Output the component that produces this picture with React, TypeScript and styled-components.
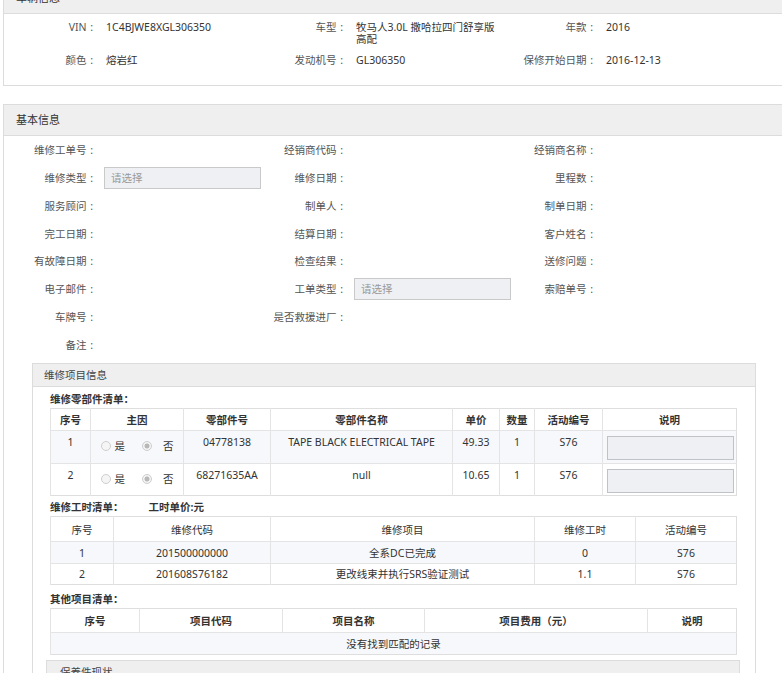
import React from 'react';
import styled, { createGlobalStyle } from 'styled-components';

const GlobalStyle = createGlobalStyle`
  html, body {
    margin: 0;
    padding: 0;
    background: #fff;
    overflow: hidden;
  }
  body {
    font-family: "Noto Sans", "Noto Sans CJK SC", sans-serif;
    font-size: 10.5px;
    color: #333;
  }
  * { box-sizing: border-box; }
`;

const Page = styled.div`
  width: 800px;
  padding-left: 3px;
`;

const Panel = styled.section<{ $top?: number; $bottom?: number }>`
  border: 1px solid #dcdcdc;
  background: #fff;
  margin-top: ${(p) => p.$top ?? 0}px;
  margin-bottom: ${(p) => p.$bottom ?? 0}px;
`;

const PanelHeader = styled.div`
  height: 31px;
  line-height: 29px;
  padding-left: 12px;
  background: #efefef;
  border-bottom: 1px solid #dcdcdc;
  color: #333;
  font-size: 11px;
`;

/* ---------- vehicle summary ---------- */

const InfoGrid = styled.div`
  display: grid;
  grid-template-columns: repeat(3, 250px);
  grid-template-rows: 33px 33px;
  height: 71px;
  padding: 7px 0 0 0;
`;

const InfoItem = styled.div`
  display: flex;
  align-items: flex-start;
  line-height: 12px;
`;

const InfoLabel = styled.div`
  width: 93px;
  flex: none;
  text-align: right;
  color: #555;
  white-space: nowrap;
`;

const InfoValue = styled.div`
  width: 148px;
  margin-left: 9px;
  color: #333;
`;

const Colon = styled.span`
  display: inline-block;
  width: 10.5px;
  text-align: center;
`;

/* ---------- basic form ---------- */

const FormGrid = styled.div`
  display: grid;
  grid-template-columns: repeat(3, 250px);
  grid-auto-rows: 27.75px;
  align-items: center;
`;

const FormItem = styled.div`
  display: flex;
  align-items: center;
`;

const FormLabel = styled.div`
  width: 93px;
  flex: none;
  text-align: right;
  color: #555;
  white-space: nowrap;
`;

const SelectBox = styled.div`
  flex: none;
  width: 157px;
  height: 22px;
  margin-left: 7px;
  padding-left: 6px;
  line-height: 20px;
  border: 1px solid #c9c9c9;
  background: #eef0f4;
  color: #999;
`;

/* ---------- nested panels ---------- */

const SubPanel = styled.div`
  margin: 5px 0 0 28px;
  width: 724px;
  border: 1px solid #dcdcdc;
  border-bottom: none;
`;

const SubHeader = styled.div`
  height: 23px;
  line-height: 22px;
  padding-left: 11px;
  background: #efefef;
  border-bottom: 1px solid #dcdcdc;
  color: #444;
`;

const SubBody = styled.div`
  padding: 5px 15px 0 13px;
`;

const Section = styled.div<{ $top: number }>`
  padding: 0 4px;
  margin-top: ${(p) => p.$top}px;
`;

const SectionTitle = styled.div`
  display: flex;
  gap: 25px;
  height: 16px;
  line-height: 15px;
  font-weight: 700;
  color: #333;
`;

const StatusPanel = styled.div`
  margin-top: 5px;
  border: 1px solid #dcdcdc;
  border-bottom: none;
  background: #efefef;
  height: 20px;
  line-height: 22px;
  padding-left: 13px;
  color: #444;
`;

/* ---------- tables ---------- */

const Table = styled.table`
  width: 100%;
  border-collapse: collapse;
  table-layout: fixed;
  border: 1px solid #dedede;
`;

const Col = styled.col<{ $w: number }>`
  width: ${(p) => p.$w}px;
`;

const HeadRow = styled.tr<{ $h: number }>`
  height: ${(p) => p.$h}px;
`;

const Th = styled.th<{ $bold?: boolean }>`
  font-weight: ${(p) => (p.$bold ? 700 : 400)};
  color: #333;
  text-align: center;
  vertical-align: middle;
  padding: 0 4px;
  border-left: 1px solid #e4e4e4;
  white-space: nowrap;
`;

const BodyRow = styled.tr<{ $h: number; $striped?: boolean }>`
  height: ${(p) => p.$h}px;
  background: ${(p) => (p.$striped ? '#f6f8fb' : '#fff')};
`;

const Td = styled.td<{ $top?: boolean }>`
  text-align: center;
  vertical-align: ${(p) => (p.$top ? 'top' : 'middle')};
  padding: ${(p) => (p.$top ? '3px 4px 0' : '0 4px')};
  line-height: 16px;
  border-left: 1px solid #e4e4e4;
  border-top: 1px solid #e4e4e4;
  white-space: nowrap;
  overflow: hidden;
  color: #333;
`;

const InputTd = styled.td`
  padding: 5px 2px 0 4px;
  vertical-align: top;
  border-left: 1px solid #e4e4e4;
  border-top: 1px solid #e4e4e4;
`;

const TextInput = styled.div`
  height: 24px;
  border: 1px solid #bfc3c8;
  background: #eef0f4;
`;

const RadioGroup = styled.div`
  display: flex;
  align-items: center;
  justify-content: center;
  padding-top: 4px;
  color: #333;
`;

const RadioOption = styled.span<{ $gap: number }>`
  display: inline-flex;
  align-items: center;
  gap: ${(p) => p.$gap}px;
  & + & {
    margin-left: 17px;
  }
`;

const RadioDot = styled.span<{ $on?: boolean }>`
  display: inline-block;
  width: 10px;
  height: 10px;
  border-radius: 50%;
  border: 1px solid #cfcfcf;
  background: ${(p) =>
    p.$on
      ? 'radial-gradient(circle, #b8b8b8 0 2.2px, #f3f3f3 2.8px)'
      : '#f5f5f5'};
`;

/* ---------- data ---------- */

const vehicleInfo: [string, string][] = [
  ['VIN', '1C4BJWE8XGL306350'],
  ['车型', '牧马人3.0L 撒哈拉四门舒享版高配'],
  ['年款', '2016'],
  ['颜色', '熔岩红'],
  ['发动机号', 'GL306350'],
  ['保修开始日期', '2016-12-13'],
];

type Field = { label: string; select?: boolean } | null;

const basicFields: Field[] = [
  { label: '维修工单号' }, { label: '经销商代码' }, { label: '经销商名称' },
  { label: '维修类型', select: true }, { label: '维修日期' }, { label: '里程数' },
  { label: '服务顾问' }, { label: '制单人' }, { label: '制单日期' },
  { label: '完工日期' }, { label: '结算日期' }, { label: '客户姓名' },
  { label: '有故障日期' }, { label: '检查结果' }, { label: '送修问题' },
  { label: '电子邮件' }, { label: '工单类型', select: true }, { label: '索赔单号' },
  { label: '车牌号' }, { label: '是否救援进厂' }, null,
  { label: '备注' }, null, null,
];

const parts = [
  { no: '1', code: '04778138', name: 'TAPE BLACK ELECTRICAL TAPE', price: '49.33', qty: '1', act: 'S76', h: 33 },
  { no: '2', code: '68271635AA', name: 'null', price: '10.65', qty: '1', act: 'S76', h: 32 },
];

const labour = [
  { no: '1', code: '201500000000', item: '全系DC已完成', hours: '0', act: 'S76', h: 22 },
  { no: '2', code: '201608S76182', item: '更改线束并执行SRS验证测试', hours: '1.1', act: 'S76', h: 21 },
];

const Label = ({ text }: { text: string }) => (
  <>
    {text}
    <Colon>:</Colon>
  </>
);

export default function App() {
  return (
    <Page>
      <GlobalStyle />

      <Panel $top={-18} $bottom={18}>
        <PanelHeader>车辆信息</PanelHeader>
        <InfoGrid>
          {vehicleInfo.map(([k, v]) => (
            <InfoItem key={k}>
              <InfoLabel>
                <Label text={k} />
              </InfoLabel>
              <InfoValue>{v}</InfoValue>
            </InfoItem>
          ))}
        </InfoGrid>
      </Panel>

      <Panel>
        <PanelHeader>基本信息</PanelHeader>
        <FormGrid>
          {basicFields.map((f, i) =>
            f ? (
              <FormItem key={i}>
                <FormLabel>
                  <Label text={f.label} />
                </FormLabel>
                {f.select && <SelectBox>请选择</SelectBox>}
              </FormItem>
            ) : (
              <FormItem key={i} />
            )
          )}
        </FormGrid>

        <SubPanel>
          <SubHeader>维修项目信息</SubHeader>
          <SubBody>
            <Section $top={0}>
              <SectionTitle>维修零部件清单：</SectionTitle>
              <Table>
                <colgroup>
                  {[40, 93, 87, 182, 47, 35, 68, 134].map((w, i) => (
                    <Col key={i} $w={w} />
                  ))}
                </colgroup>
                <thead>
                  <HeadRow $h={22}>
                    {['序号', '主因', '零部件号', '零部件名称', '单价', '数量', '活动编号', '说明'].map((t) => (
                      <Th key={t} $bold>{t}</Th>
                    ))}
                  </HeadRow>
                </thead>
                <tbody>
                  {parts.map((p, i) => (
                    <BodyRow key={p.no} $h={p.h} $striped={i === 0}>
                      <Td $top>{p.no}</Td>
                      <Td $top>
                        <RadioGroup>
                          <RadioOption $gap={4}>
                            <RadioDot />是
                          </RadioOption>
                          <RadioOption $gap={11}>
                            <RadioDot $on />否
                          </RadioOption>
                        </RadioGroup>
                      </Td>
                      <Td $top>{p.code}</Td>
                      <Td $top>{p.name}</Td>
                      <Td $top>{p.price}</Td>
                      <Td $top>{p.qty}</Td>
                      <Td $top>{p.act}</Td>
                      <InputTd>
                        <TextInput />
                      </InputTd>
                    </BodyRow>
                  ))}
                </tbody>
              </Table>
            </Section>

            <Section $top={4}>
              <SectionTitle>
                <span>维修工时清单：</span>
                <span>工时单价:元</span>
              </SectionTitle>
              <Table>
                <colgroup>
                  {[63, 157, 264, 101, 101].map((w, i) => (
                    <Col key={i} $w={w} />
                  ))}
                </colgroup>
                <thead>
                  <HeadRow $h={25}>
                    {['序号', '维修代码', '维修项目', '维修工时', '活动编号'].map((t) => (
                      <Th key={t}>{t}</Th>
                    ))}
                  </HeadRow>
                </thead>
                <tbody>
                  {labour.map((r, i) => (
                    <BodyRow key={r.no} $h={r.h} $striped={i === 0}>
                      <Td>{r.no}</Td>
                      <Td>{r.code}</Td>
                      <Td>{r.item}</Td>
                      <Td>{r.hours}</Td>
                      <Td>{r.act}</Td>
                    </BodyRow>
                  ))}
                </tbody>
              </Table>
            </Section>

            <Section $top={7}>
              <SectionTitle>其他项目清单：</SectionTitle>
              <Table>
                <colgroup>
                  {[89, 143, 142, 223, 89].map((w, i) => (
                    <Col key={i} $w={w} />
                  ))}
                </colgroup>
                <thead>
                  <HeadRow $h={24}>
                    {['序号', '项目代码', '项目名称', '项目费用（元）', '说明'].map((t) => (
                      <Th key={t} $bold>{t}</Th>
                    ))}
                  </HeadRow>
                </thead>
                <tbody>
                  <BodyRow $h={22} $striped>
                    <Td colSpan={5}>没有找到匹配的记录</Td>
                  </BodyRow>
                </tbody>
              </Table>
            </Section>

            <StatusPanel>保养件现状</StatusPanel>
          </SubBody>
        </SubPanel>
      </Panel>
    </Page>
  );
}
